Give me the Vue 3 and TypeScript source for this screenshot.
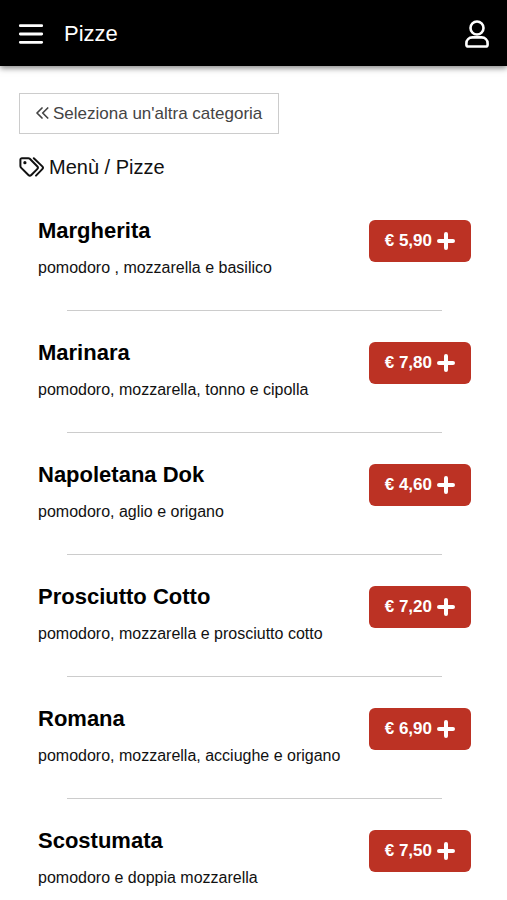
<script setup lang="ts">
interface Pizza {
  name: string
  ingredients: string
  price: string
}

const pizzas: Pizza[] = [
  { name: 'Margherita', ingredients: 'pomodoro , mozzarella e basilico', price: '5,90' },
  { name: 'Marinara', ingredients: 'pomodoro, mozzarella, tonno e cipolla', price: '7,80' },
  { name: 'Napoletana Dok', ingredients: 'pomodoro, aglio e origano', price: '4,60' },
  { name: 'Prosciutto Cotto', ingredients: 'pomodoro, mozzarella e prosciutto cotto', price: '7,20' },
  { name: 'Romana', ingredients: 'pomodoro, mozzarella, acciughe e origano', price: '6,90' },
  { name: 'Scostumata', ingredients: 'pomodoro e doppia mozzarella', price: '7,50' },
]
</script>

<template>
  <header class="topbar">
    <button class="icon-button" type="button" aria-label="Apri menù">
      <svg width="26" height="22" viewBox="0 0 26 22" fill="none" stroke="currentColor" stroke-width="2.8" stroke-linecap="round">
        <path d="M2.3 2.7h21.4M2.3 11h21.4M2.3 19.3h21.4" />
      </svg>
    </button>
    <h1 class="title">Pizze</h1>
    <button class="icon-button" type="button" aria-label="Profilo">
      <svg width="24" height="28" viewBox="0 0 24 28" fill="none" stroke="currentColor" stroke-width="2.6" stroke-linejoin="round">
        <circle cx="12" cy="8" r="6.5" />
        <path d="M7.4 17.4h9.2c3.400 0 6 2.500 6 5.800v1.500c0 1-.8 1.800-1.800 1.800H3.200c-1 0-1.800-.8-1.800-1.800v-1.500c0-3.300 2.600-5.800 6-5.800z" />
      </svg>
    </button>
  </header>

  <main class="page">
    <button class="back" type="button">
      <svg width="13" height="14" viewBox="0 0 13 14" fill="none" stroke="currentColor" stroke-width="1.7" stroke-linecap="round" stroke-linejoin="round">
        <path d="M6 1 1 6l5 5M11.700 1l-5 5 5 5" />
      </svg>
      Seleziona un'altra categoria
    </button>

    <h2 class="crumbs">
      <svg width="26" height="20" viewBox="0 0 26 20" fill="none" stroke="currentColor" stroke-width="2" stroke-linecap="round" stroke-linejoin="round">
        <path d="M1.4 2.8v6.3c0 .6.2 1.1.6 1.5l7.4 7.4c.8.8 2.1.8 2.9 0l5.9-5.9c.8-.8.8-2.1 0-2.9L10.8 1.800c-.4-.4-.9-.6-1.5-.6H3c-.9 0-1.600.7-1.600 1.600z" />
        <path d="M14.800 1.300l8.500 8.100c.8.8.8 1.900 0 2.700L17 18.600" />
        <circle cx="5.900" cy="5.700" r="1.600" fill="currentColor" stroke="none" />
      </svg>
      Menù / Pizze
    </h2>

    <ul class="menu">
      <li v-for="pizza in pizzas" :key="pizza.name" class="item">
        <div class="details">
          <h3 class="name">{{ pizza.name }}</h3>
          <p class="ingredients">{{ pizza.ingredients }}</p>
        </div>
        <button class="add" type="button" :aria-label="`Aggiungi ${pizza.name}, € ${pizza.price}`">
          € {{ pizza.price }}
          <svg width="18" height="18" viewBox="0 0 18 18" fill="none" stroke="currentColor" stroke-width="4" stroke-linecap="round">
            <path d="M9 2v14M2 9h14" />
          </svg>
        </button>
      </li>
    </ul>
  </main>
</template>

<style>
body {
  margin: 0;
  background: #fff;
}
</style>

<style scoped>
.topbar,
.page {
  font-family: "Liberation Sans", Arial, sans-serif;
}

.topbar {
  display: flex;
  align-items: center;
  gap: 20px;
  box-sizing: border-box;
  height: 66px;
  padding: 2px 18px 0;
  background: #000;
  color: #fff;
  box-shadow: 0 2px 6px rgba(0, 0, 0, 0.5);
}

.title {
  flex: 1;
  margin: 0;
  font-size: 22px;
  font-weight: 400;
  line-height: 28px;
}

.icon-button {
  display: flex;
  padding: 0;
  border: 0;
  background: none;
  color: inherit;
  cursor: pointer;
}

.page {
  padding: 27px 18px 0 19px;
  color: #111;
}

.back {
  display: flex;
  align-items: center;
  gap: 4px;
  height: 41px;
  padding: 0 16px;
  border: 1px solid #ccc;
  background: #fff;
  color: #444;
  font-family: inherit;
  font-size: 17px;
  cursor: pointer;
}

.crumbs {
  display: flex;
  align-items: center;
  gap: 4px;
  margin: 20px 0 0;
  font-size: 20px;
  font-weight: 400;
  line-height: 26px;
}

.menu {
  margin: 9px 0 0;
  padding: 0;
  list-style: none;
}

.item {
  display: grid;
  grid-template-columns: 1fr auto;
  align-items: start;
  box-sizing: border-box;
  min-height: 122px;
  padding: 31px 18px 0 19px;
}

.item::after {
  content: "";
  grid-column: 1 / -1;
  align-self: end;
  height: 1px;
  margin: 0 29px;
  background: #ccc;
}

.item:last-child {
  min-height: 0;
}

.item:last-child::after {
  display: none;
}

.name {
  margin: 0;
  color: #000;
  font-size: 22px;
  font-weight: 700;
  line-height: 22px;
}

.ingredients {
  margin: 16px 0 0;
  font-size: 16px;
  line-height: 20px;
}

.add {
  display: flex;
  align-items: center;
  justify-content: center;
  gap: 5px;
  height: 42px;
  padding: 0 16px;
  border: 0;
  border-radius: 6px;
  background: #bc3224;
  color: #fff;
  font-family: inherit;
  font-size: 17px;
  font-weight: 700;
  white-space: nowrap;
  cursor: pointer;
}
</style>
